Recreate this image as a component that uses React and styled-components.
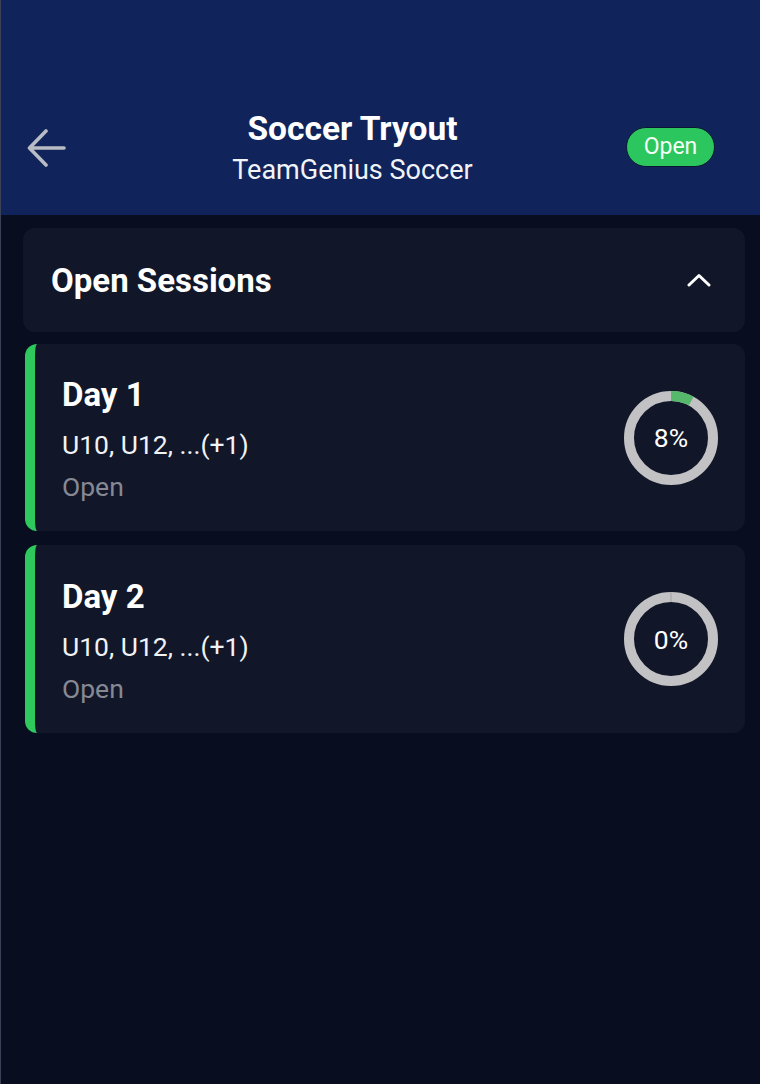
import React from "react";
import styled, { createGlobalStyle } from "styled-components";

const Global = createGlobalStyle`
  html, body { margin: 0; padding: 0; background: #080e20; }
  body { font-family: Roboto, "Noto Sans", Arial, sans-serif; }
  * { box-sizing: border-box; }
`;

const Page = styled.div`
  min-height: 1084px;
  width: 760px;
  background: #080e20;
  border-left: 1px solid #3b4157;
`;

const Header = styled.header`
  height: 215px;
  background: #10245b;
  display: flex;
  align-items: center;
  padding: 80px 45px 0 22px;
`;

const BackButton = styled.button`
  width: 62px;
  height: 46px;
  border: 0;
  background: transparent;
  padding: 0 0 0 4px;
  display: flex;
  align-items: center;
  justify-content: flex-start;
  cursor: pointer;
`;

const TitleBlock = styled.div`
  flex: 1;
  display: flex;
  flex-direction: column;
  align-items: center;
  margin-right: 6px;
`;

const Title = styled.h1`
  margin: 0;
  font-size: 33.5px;
  line-height: 40px;
  font-weight: 700;
  color: #ffffff;
`;

const Subtitle = styled.div`
  font-size: 27px;
  line-height: 34px;
  color: #f2f3f7;
  margin-top: 4px;
`;

const Badge = styled.span`
  width: 89px;
  height: 40px;
  border-radius: 20px;
  background: #2bc65e;
  border: 1.5px solid #0a1633;
  color: #f4fff6;
  font-size: 23px;
  display: flex;
  align-items: center;
  justify-content: center;
  margin-top: -2px;
`;

const Content = styled.main`
  padding: 13px 15px 0 22px;
  display: flex;
  flex-direction: column;
  gap: 12px;
`;

const SectionHeader = styled.div`
  height: 104px;
  background: #111729;
  border-radius: 12px;
  display: flex;
  align-items: center;
  justify-content: space-between;
  padding: 0 34px 0 28px;
`;

const SectionTitle = styled.h2`
  margin: 0;
  font-size: 33px;
  font-weight: 700;
  color: #ffffff;
`;

const List = styled.div`
  display: flex;
  flex-direction: column;
  gap: 14px;
  padding-left: 2px;
`;

const Card = styled.div`
  height: ${(p) => p.$h}px;
  background: #111729;
  border-radius: 12px;
  border-left: 10px solid #2fc85c;
  display: flex;
  align-items: center;
  justify-content: space-between;
  padding: 0 26px 0 27px;
`;

const CardText = styled.div`
  display: flex;
  flex-direction: column;
  margin-top: 4px;
`;

const CardTitle = styled.div`
  font-size: 33px;
  line-height: 40px;
  font-weight: 700;
  color: #ffffff;
`;

const CardGroups = styled.div`
  font-size: 26.5px;
  line-height: 34px;
  color: #f1f2f6;
  margin-top: 13px;
`;

const CardStatus = styled.div`
  font-size: 26.5px;
  line-height: 34px;
  color: #868994;
  margin-top: 8px;
`;

const RingWrap = styled.div`
  position: relative;
  width: 94px;
  height: 94px;
  margin-right: 1px;
`;

const RingLabel = styled.span`
  position: absolute;
  inset: 0;
  display: flex;
  align-items: center;
  justify-content: center;
  font-size: 26.5px;
  color: #ffffff;
`;

function Ring({ pct }) {
  const r = 42;
  const c = 2 * Math.PI * r;
  return (
    <RingWrap>
      <svg width="94" height="94" viewBox="0 0 94 94">
        <circle cx="47" cy="47" r={r} fill="none" stroke="#c2c2c4" strokeWidth="10" />
        {pct > 0 && (
          <circle
            cx="47"
            cy="47"
            r={r}
            fill="none"
            stroke="#55b86b"
            strokeWidth="10"
            strokeDasharray={`${(c * pct) / 100} ${c}`}
            transform="rotate(-90 47 47)"
          />
        )}
        {pct === 0 && <line x1="47" y1="0" x2="47" y2="10" stroke="#9a9a9c" strokeWidth="0.8" />}
      </svg>
      <RingLabel>{pct}%</RingLabel>
    </RingWrap>
  );
}

const sessions = [
  { name: "Day 1", groups: "U10, U12, ...(+1)", status: "Open", pct: 8, h: 187 },
  { name: "Day 2", groups: "U10, U12, ...(+1)", status: "Open", pct: 0, h: 188 },
];

export default function App() {
  return (
    <Page>
      <Global />
      <Header>
        <BackButton aria-label="Back">
          <svg width="40" height="40" viewBox="0 0 40 40" fill="none">
            <path
              d="M37 20H3M19 3L2.5 20L19 37"
              stroke="#b9bcc5"
              strokeWidth="3.6"
              strokeLinecap="round"
              strokeLinejoin="round"
            />
          </svg>
        </BackButton>
        <TitleBlock>
          <Title>Soccer Tryout</Title>
          <Subtitle>TeamGenius Soccer</Subtitle>
        </TitleBlock>
        <Badge>Open</Badge>
      </Header>
      <Content>
        <SectionHeader>
          <SectionTitle>Open Sessions</SectionTitle>
          <svg width="24" height="14" viewBox="0 0 24 14" fill="none">
            <path d="M2 12L12 2.5L22 12" stroke="#ffffff" strokeWidth="3" strokeLinecap="round" strokeLinejoin="round" />
          </svg>
        </SectionHeader>
        <List>
          {sessions.map((s) => (
            <Card key={s.name} $h={s.h}>
              <CardText>
                <CardTitle>{s.name}</CardTitle>
                <CardGroups>{s.groups}</CardGroups>
                <CardStatus>{s.status}</CardStatus>
              </CardText>
              <Ring pct={s.pct} />
            </Card>
          ))}
        </List>
      </Content>
    </Page>
  );
}
